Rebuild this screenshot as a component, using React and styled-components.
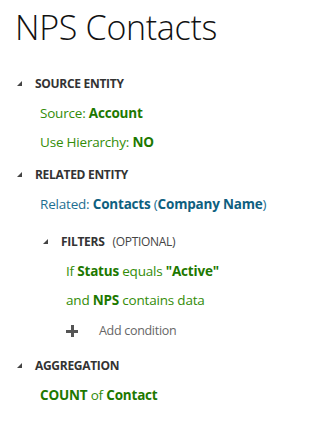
import React from "react";
import styled, { createGlobalStyle } from "styled-components";

const GlobalStyle = createGlobalStyle`
    body {
        margin: 0;
        background: #fff;
        font-family: "Open Sans", "Noto Sans", sans-serif;
    }
`;

const Page = styled.div`
    padding: 5px 0 0 15px;
`;

const Title = styled.h1`
    margin: 0;
    font-size: 34px;
    font-weight: 300;
    line-height: 44px;
    color: #111;
    letter-spacing: -0.3px;
`;

const Section = styled.div`
    margin-top: ${(p) => p.$gap || 4}px;
    padding-left: ${(p) => p.$indent || 0}px;
`;

const HeaderRow = styled.div`
    display: flex;
    align-items: center;
    height: 29px;
    padding-left: 1px;
`;

const Caret = styled.span`
    width: 0;
    height: 0;
    border-style: solid;
    border-width: 0 0 5px 5px;
    border-color: transparent transparent #444 transparent;
    margin: 0 13px 0 1px;
`;

const HeaderLabel = styled.span`
    font-size: 12px;
    font-weight: 700;
    color: #333;
    letter-spacing: -0.3px;
`;

const Optional = styled.span`
    font-size: 12px;
    color: #444;
    margin-left: 8px;
    letter-spacing: -0.3px;
`;

const Line = styled.div`
    display: flex;
    align-items: center;
    height: ${(p) => p.$h || 29}px;
    padding-left: ${(p) => p.$indent || 25}px;
    font-size: 13.5px;
    letter-spacing: -0.2px;
    color: ${(p) => (p.$tone === "blue" ? "#1f6f92" : "#338c08")};
    white-space: pre;
`;

const Strong = styled.b`
    font-weight: 700;
    color: ${(p) => (p.$tone === "blue" ? "#0e5f80" : "#1d7800")};
`;

const AddButton = styled.div`
    display: flex;
    align-items: center;
    height: 33px;
    padding-left: 51px;
    font-size: 12.5px;
    color: #666;
    letter-spacing: -0.3px;
`;

const Plus = styled.span`
    position: relative;
    width: 12px;
    height: 12px;
    margin-right: 21px;
    &::before,
    &::after {
        content: "";
        position: absolute;
        background: #555;
    }
    &::before {
        left: 0;
        top: 5px;
        width: 12px;
        height: 3px;
    }
    &::after {
        left: 4.5px;
        top: 0;
        width: 3px;
        height: 12px;
    }
`;

export default function App() {
    return (
        <>
            <GlobalStyle />
            <Page>
                <Title>NPS Contacts</Title>

                <Section $gap={20}>
                    <HeaderRow>
                        <Caret />
                        <HeaderLabel>SOURCE ENTITY</HeaderLabel>
                    </HeaderRow>
                    <Line>
                        {"Source: "}
                        <Strong>Account</Strong>
                    </Line>
                    <Line>
                        {"Use Hierarchy: "}
                        <Strong>NO</Strong>
                    </Line>
                </Section>

                <Section>
                    <HeaderRow>
                        <Caret />
                        <HeaderLabel>RELATED ENTITY</HeaderLabel>
                    </HeaderRow>
                    <Line $tone="blue">
                        {"Related: "}
                        <Strong $tone="blue">Contacts</Strong>
                        {" ("}
                        <Strong $tone="blue">Company Name</Strong>
                        {")"}
                    </Line>

                    <Section $gap={9} $indent={26}>
                        <HeaderRow>
                            <Caret />
                            <HeaderLabel>FILTERS</HeaderLabel>
                            <Optional>(OPTIONAL)</Optional>
                        </HeaderRow>
                        <Line>
                            {"If "}
                            <Strong>Status</Strong>
                            {" equals "}
                            <Strong>"Active"</Strong>
                        </Line>
                        <Line>
                            {"and "}
                            <Strong>NPS</Strong>
                            {" contains data"}
                        </Line>
                    </Section>
                    <AddButton>
                        <Plus />
                        Add condition
                    </AddButton>
                </Section>

                <Section>
                    <HeaderRow>
                        <Caret />
                        <HeaderLabel>AGGREGATION</HeaderLabel>
                    </HeaderRow>
                    <Line>
                        <Strong>COUNT</Strong>
                        {" of "}
                        <Strong>Contact</Strong>
                    </Line>
                </Section>
            </Page>
        </>
    );
}
